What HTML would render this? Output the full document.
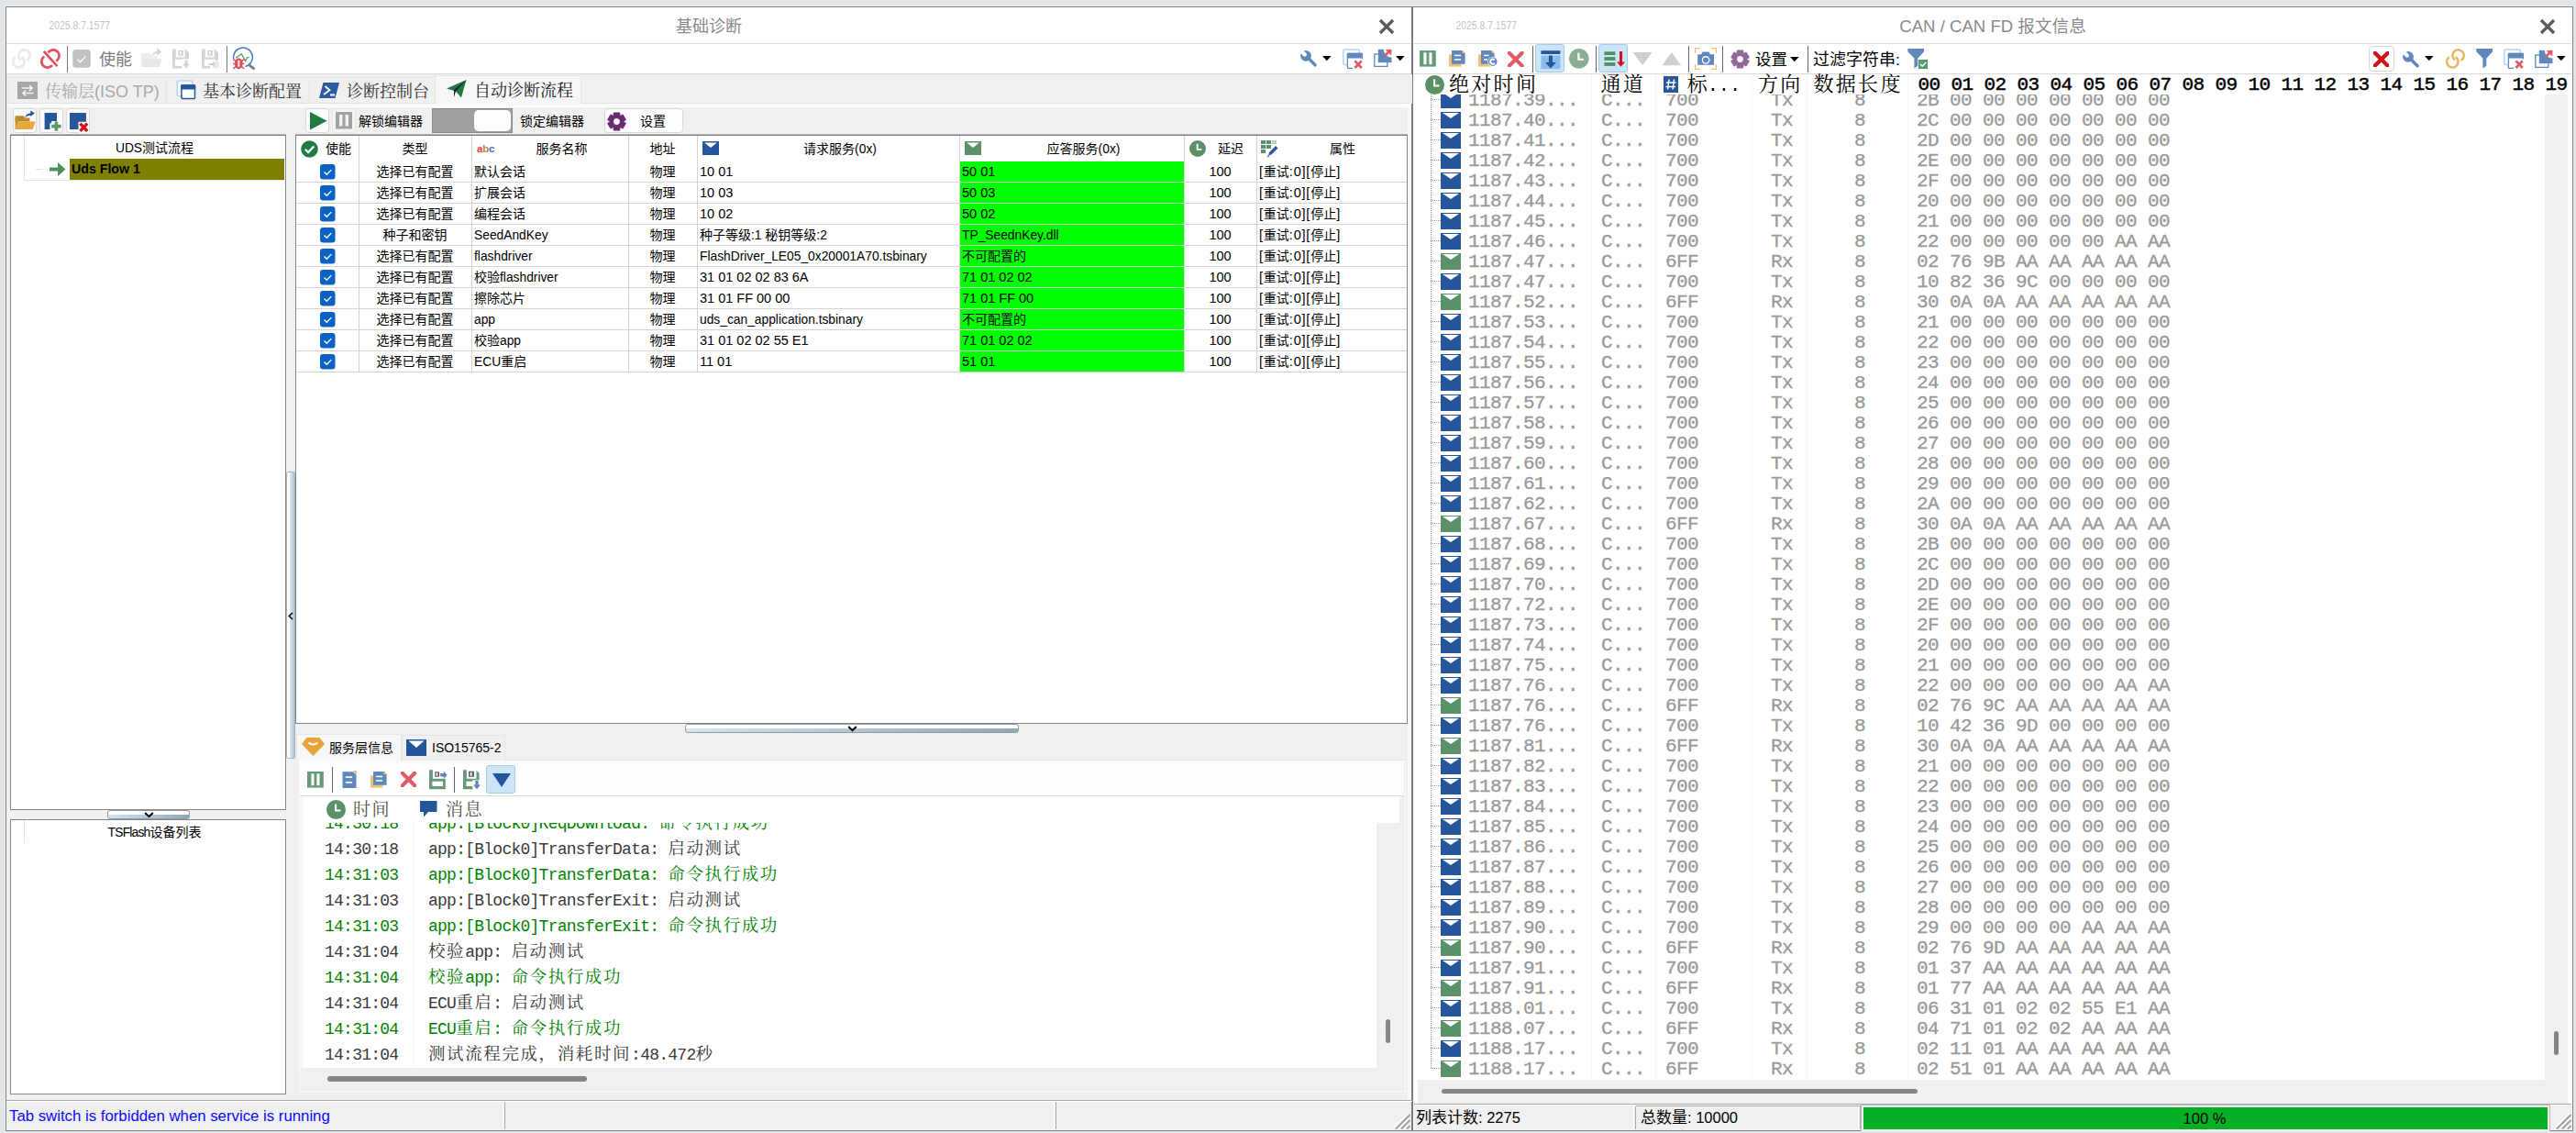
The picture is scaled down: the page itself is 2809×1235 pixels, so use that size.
<!DOCTYPE html>
<html lang="zh"><head><meta charset="utf-8"><title>UI</title><style>
*{box-sizing:border-box;margin:0;padding:0}
html,body{width:2809px;height:1235px;overflow:hidden}
body{background:#e1e4e9;position:relative;font-family:"Liberation Sans","Noto Sans CJK SC",sans-serif;font-size:14px;color:#000}
div,svg,span.a{position:absolute;white-space:nowrap}
.s{font-family:"Liberation Sans","Noto Serif CJK SC",serif}
.m{font-family:"Liberation Mono","Noto Serif CJK SC",monospace}
.l{font-size:13.8px}
.d{font-size:14.5px}
.k{font-size:14.5px;letter-spacing:.8px}
.btn{background:#fdfdfd;border:1px solid #d9d9d9;border-radius:4px}
.act{background:#cce4f7;border:1px solid #9fcdf0;border-radius:3px}
.sep{background:#666;width:1px}
.ctr{text-align:center}
.lg{font-size:18px;letter-spacing:-.750px;height:28px;line-height:28px}
.c{font-size:18.500px;letter-spacing:1.600px}
.cr{left:0;width:1233px;height:22px;line-height:22px;font-size:21px;letter-spacing:-.600px;color:#999;-webkit-text-stroke:.3px #999}
.cr span{position:absolute;top:1px}
.cr i{position:absolute;left:29px;top:2px;width:22px;height:18px;background:#25569b}
.cr i.g{background:#5b9168}
.cr i:after{content:"";position:absolute;left:2px;top:1.300px;border-left:9px solid transparent;border-right:9px solid transparent;border-top:6.500px solid #fff}
.cr b{position:absolute;left:18px;top:10px;width:11px;height:1px;background:repeating-linear-gradient(90deg,#9a9a9a 0,#9a9a9a 1px,#fff 1px,#fff 2px)}
</style></head><body>
<div style="left:5px;top:6px;width:1536px;height:1px;background:#e9ecf1"></div>
<div style="left:5px;top:6px;width:1px;height:1227px;background:#e9ecf1"></div>
<div style="left:6px;top:7px;width:1533px;height:1226px;background:#f0f0f0;border-left:1px solid #828282;border-top:1px solid #828282;border-bottom:1px solid #828282"></div>
<div style="left:7px;top:8px;width:1532px;height:73px;background:#fff"></div>
<div style="left:7px;top:47px;width:1533px;height:1px;background:#dedede"></div>
<div style="left:7px;top:80px;width:1533px;height:1px;background:#d9d9d9"></div>
<div style="left:573px;top:16px;height:26px;line-height:26px;width:400px;font-size:18px;color:#8a8a8a;text-align:center">基础诊断</div>
<div style="left:53.5px;top:18px;height:20px;line-height:20px;font-size:10.400px;color:#c4c4c4;transform:scaleY(1.270);transform-origin:left center">2025.8.7.1577</div>
<svg style="left:1503px;top:20px;" width="18" height="18" viewBox="0 0 18 18"><path d="M2 2L16 16M16 2L2 16" stroke="#5a5a5a" stroke-width="3.2" fill="none"/></svg>
<div style="left:1540px;top:6px;width:1266px;height:1px;background:#e9ecf1"></div>
<div style="left:1539px;top:7px;width:1267px;height:1226px;background:#fff;border-left:2px solid #7a7a7a;border-top:1px solid #828282;border-right:1px solid #828282;border-bottom:1px solid #828282"></div>
<div style="left:1542px;top:47px;width:1262px;height:1px;background:#dedede"></div>
<div style="left:1542px;top:80px;width:1262px;height:1px;background:#d9d9d9"></div>
<div style="left:1973px;top:16px;height:26px;line-height:26px;width:400px;font-size:18.6px;color:#8a8a8a;text-align:center">CAN / CAN FD 报文信息</div>
<div style="left:1587.5px;top:18px;height:20px;line-height:20px;font-size:10.400px;color:#c4c4c4;transform:scaleY(1.270);transform-origin:left center">2025.8.7.1577</div>
<svg style="left:2769px;top:20px;" width="18" height="18" viewBox="0 0 18 18"><path d="M2 2L16 16M16 2L2 16" stroke="#5a5a5a" stroke-width="3.2" fill="none"/></svg>
<svg style="left:12.5px;top:53px;" width="22" height="23" viewBox="0 0 22 23"><g fill="none" stroke="#ebebeb" stroke-width="2.8" stroke-linecap="round" stroke-dasharray="28.83 10.13"><circle cx="13.550" cy="7.500" r="6.2" transform="rotate(137 13.550 7.500)"/><circle cx="7.300" cy="14.300" r="6.2" transform="rotate(-47 7.300 14.300)"/></g></svg>
<svg style="left:44px;top:52px;" width="24" height="24" viewBox="0 0 24 24"><g fill="none" stroke="#e05060" stroke-width="2.700"><path d="M9.210 4.490A6.500 6.500 0 1 1 18.260 13.780" stroke-linecap="round"/><path d="M12.220 19.830A6.500 6.500 0 0 1 3.350 10.320" stroke-linecap="round"/><path d="M3.800 3.800L18.400 20.100"/></g></svg>
<div class="sep" style="left:73px;top:50px;width:1px;height:29px;background:#777"></div>
<svg style="left:79px;top:54px;" width="20" height="20" viewBox="0 0 20 20"><rect x=".2" y="0" width="19.600" height="19.800" rx="3.600" fill="#c2c2c2"/><path d="M5.300 10.700l3.100 3.100 6.200-6.400" stroke="#fff" stroke-width="1.300" fill="none"/></svg>
<div style="left:108px;top:53px;height:24px;line-height:24px;font-size:18px;color:#7d7d7d">使能</div>
<svg style="left:154px;top:52px;" width="24" height="22" viewBox="0 0 24 22"><path d="M0 6.300h9.600l1.500 2.200H17v4H0z" fill="#ededed"/><path d="M0 8.500L3 12.300.9 21H0z" fill="#ededed"/><path d="M3 12.300h19.600L19.900 21H.9z" fill="#e7e7e7"/><path d="M11.800 8.800C12.500 5.500 14.500 4 17.200 3.900V0L22 4.400 17.200 8.800V6.200C15 6.200 13.200 7 11.800 8.800z" fill="#d6d6d6"/></svg>
<svg style="left:188px;top:53px;" width="20" height="23" viewBox="0 0 20 23"><path d="M0 .4h14.200L18 4.600V21.600H0z" fill="#d5d5d5"/><rect x="3.800" y="0" width="9.800" height="9.400" fill="#fff"/><rect x="6.300" y="2" width="5.400" height="5.800" fill="#cfcfcf"/><rect x="8" y="3" width="1.600" height="3.800" fill="#fff"/><rect x="3" y="11.800" width="12" height="7.100" fill="#fff"/><rect x="10.400" y="11.300" width="10" height="11" fill="#fff"/><path d="M13.500 12.400h3v4.400h2.400L15 21.600 11.200 16.800h2.300z" fill="#d5d5d5"/></svg>
<svg style="left:220px;top:53px;" width="20" height="23" viewBox="0 0 20 23"><path d="M0 .4h14.200L18 4.600V21.600H0z" fill="#d5d5d5"/><rect x="3.800" y="0" width="9.800" height="9.400" fill="#fff"/><rect x="6.300" y="2" width="5.400" height="5.800" fill="#cfcfcf"/><rect x="8" y="3" width="1.600" height="3.800" fill="#fff"/><rect x="3" y="11.800" width="12" height="7.100" fill="#fff"/><rect x="9" y="13" width="11" height="9" fill="#fff"/><rect x="12" y="14" width="7" height="7" fill="#e9e9e9"/><path d="M7.700 16h4v-1.800L14.800 17 11.700 19.800V18h-4z" fill="#d0d0d0"/></svg>
<div class="sep" style="left:247px;top:50px;width:1px;height:29px;background:#777"></div>
<svg style="left:253px;top:51px;" width="26" height="26" viewBox="0 0 26 26"><path d="M1.800 13.500A10.400 10.400 0 1 1 14.500 21.500" fill="none" stroke="#4a78b8" stroke-width="1.500"/><path d="M18.700 19.800l4.900 3.800" stroke="#7d7d7d" stroke-width="2.800" stroke-linecap="round"/><path d="M4.300 12.200l6-4.600 4.400 7.900 1.900-3.800h2.100" stroke="#5a9a6a" stroke-width="1.300" fill="none"/><ellipse cx="7.300" cy="18.300" rx="4.400" ry="6" fill="#e0505e"/><path d="M1.300 13.600l3.500 2.500M1 18.500h4M1.300 23.800l3.500-2.600M13.300 13.600L9.800 16.100M13.600 18.500h-4M13.300 23.800L9.800 21.200" stroke="#e0505e" stroke-width="1.500"/><rect x="6.400" y="14.800" width="1.900" height="6.800" fill="#fff"/></svg>
<svg style="left:1417px;top:54px;" width="20" height="20" viewBox="0 0 20 20"><circle cx="7" cy="6.800" r="5.900" fill="#6088bc"/><path d="M5.700 5.500L0 -.2" stroke="#fff" stroke-width="4.300" stroke-linecap="round"/><path d="M9 8.800l8 8" stroke="#6088bc" stroke-width="3.500" stroke-linecap="round"/></svg>
<svg style="left:1442px;top:61px;" width="10" height="6" viewBox="0 0 10 6"><path d="M0 0h9.600L4.800 5.200z" fill="#000"/></svg>
<svg style="left:1464px;top:53px;" width="24" height="24" viewBox="0 0 24 24"><rect x=".8" y="1" width="17.400" height="16.600" rx="1.500" fill="#fff" stroke="#b5d4f5" stroke-width="1.500"/><rect x="5.400" y="5.400" width="16" height="16" rx="1" fill="#fff" stroke="#6088bc" stroke-width="1.300"/><rect x="4.800" y="4.800" width="17.200" height="5.800" rx="1" fill="#6088bc"/><rect x="11.200" y="11.500" width="12" height="12" fill="#fff"/><path d="M13.400 13.400l7.400 7.600M20.800 13.400l-7.400 7.600" stroke="#e05a68" stroke-width="2.700"/></svg>
<svg style="left:1497px;top:53px;" width="22" height="22" viewBox="0 0 22 22"><rect x="1.800" y="6" width="14" height="13.400" fill="#fff" stroke="#6088bc" stroke-width="1.300"/><rect x="5.800" y=".8" width="14.700" height="14.400" fill="#6088bc"/><circle cx="20.500" cy=".8" r="8.800" fill="#fff"/><path d="M12.800 8L17.500 3.500" stroke="#e05a68" stroke-width="2.800"/><path d="M13.600 1.200L20.600.700 20.200 7.600z" fill="#e05a68"/></svg>
<svg style="left:1522px;top:61px;" width="10" height="6" viewBox="0 0 10 6"><path d="M0 0h9.600L4.800 5.200z" fill="#000"/></svg>
<div style="left:7px;top:81px;width:1533px;height:32px;background:#f0f0f0"></div>
<div style="left:9px;top:84px;width:173px;height:29px;border:1px solid #e6e6e6;border-bottom:none;background:#f0f0f0"></div>
<div style="left:181px;top:84px;width:157px;height:29px;border:1px solid #e6e6e6;border-bottom:none;background:#f0f0f0"></div>
<div style="left:337px;top:84px;width:138px;height:29px;border:1px solid #e6e6e6;border-bottom:none;background:#f0f0f0"></div>
<div style="left:474px;top:82px;width:160px;height:32px;border:1px solid #e8e8e8;border-bottom:none;background:#f7f7f7"></div>
<div style="left:9px;top:112px;width:465px;height:1px;background:#e2e2e2"></div>
<div style="left:634px;top:112px;width:902px;height:1px;background:#e2e2e2"></div>
<div style="left:9px;top:113px;width:1527px;height:3px;background:#fafafa"></div>
<div style="left:9px;top:116px;width:1527px;height:1px;background:#fff"></div>
<svg style="left:19px;top:89px;" width="22" height="19" viewBox="0 0 22 19"><rect width="22" height="19" fill="#a6a6a6"/><path d="M4.500 7h11.500M13 4l3 3-3 3M17.500 12.500H6M9 9.500l-3 3 3 3" stroke="#f4f4f4" stroke-width="1.7" fill="none"/></svg>
<div class="s" style="left:49px;top:87px;height:26px;line-height:26px;font-size:18px;color:#a9a9a9">传输层(ISO TP)</div>
<svg style="left:192px;top:87px;" width="23" height="22" viewBox="0 0 23 22"><rect x="1.300" y="1" width="16.700" height="16.800" rx="1.500" fill="#f4f8fd" stroke="#b5d4f5" stroke-width="1.500"/><rect x="5.900" y="5.900" width="14.600" height="14.600" rx="1" fill="#fff" stroke="#25569b" stroke-width="1.500"/><rect x="5.200" y="5.200" width="16" height="5.400" rx="1" fill="#25569b"/></svg>
<div class="s" style="left:221px;top:87px;height:26px;line-height:26px;font-size:18px;color:#333">基本诊断配置</div>
<svg style="left:348px;top:90px;" width="22" height="17" viewBox="0 0 22 17"><path d="M4.500 0H22L17.500 17H0z" fill="#2c5aa0"/><path d="M6.500 4l5 4.300-6.500 4.700M12 13.500h5" stroke="#fff" stroke-width="1.800" fill="none"/></svg>
<div class="s" style="left:378px;top:87px;height:26px;line-height:26px;font-size:18px;color:#333">诊断控制台</div>
<svg style="left:487px;top:87px;" width="22" height="20" viewBox="0 0 22 20"><path d="M0 9.500L21.500 0 16 19.500 10 12.500z" fill="#1f7a43"/><path d="M10 12.500L21.500 0 8 11v8z" fill="#222"/></svg>
<div class="s" style="left:517px;top:86px;height:26px;line-height:26px;font-size:18px;color:#222">自动诊断流程</div>
<div class="btn" style="left:13.5px;top:118px;width:26px;height:26.5px;"></div>
<div class="btn" style="left:42.5px;top:118px;width:26px;height:26.5px;"></div>
<div class="btn" style="left:71.5px;top:118px;width:26px;height:26.5px;"></div>
<svg style="left:16px;top:120px;" width="24" height="22" viewBox="0 0 24 22"><path d="M.5 6.200h9.200l1.600 2.300h5.200v4H.5z" fill="#b98a32"/><path d="M.5 8L4.500 12.400.9 21H.5z" fill="#c9932f"/><path d="M4.500 12.400h18.300L19.700 21H.9z" fill="#e8a83c"/><path d="M11.200 8.400C12 5.300 14 3.700 17.200 3.600V.2L21.900 3.500 17.200 7V5.700C14.800 5.700 12.800 6.600 11.200 8.400z" fill="#25569b"/></svg>
<svg style="left:48px;top:122px;" width="20" height="22" viewBox="0 0 20 22"><path d="M.6 1H14v9h-5.800v2.200H6.400V19H.6z" fill="#25569b"/><path d="M11.600 10.400h3.600v3.400h3.400v3.600h-3.400v3.400h-3.600v-3.400H8.200v-3.600h3.400z" fill="#5b9a68"/></svg>
<svg style="left:75px;top:122px;" width="22" height="23" viewBox="0 0 22 23"><rect x="1" y="1" width="17.900" height="18" fill="#25569b"/><rect x="10.500" y="10.800" width="12" height="12" fill="#fdfdfd"/><path d="M12.400 12.600l7.800 8.200M20.200 12.600l-7.800 8.200" stroke="#d0121b" stroke-width="3.400"/></svg>
<div class="btn" style="left:332.5px;top:118px;width:26px;height:26.5px;"></div>
<svg style="left:338px;top:122px;" width="19" height="20" viewBox="0 0 19 20"><path d="M0 0L18.500 9.700 0 19.500z" fill="#1f7a43"/></svg>
<div style="left:362px;top:118px;width:26px;height:27px;background:#f4f4f4;border:1px solid #e6e6e6;border-radius:3px"></div>
<svg style="left:366px;top:122px;" width="18" height="19" viewBox="0 0 18 19"><rect width="18" height="18.500" fill="#a3a3a3"/><rect x="4" y="3" width="3.400" height="12.500" fill="#f2f2f2"/><rect x="10.600" y="3" width="3.400" height="12.500" fill="#f2f2f2"/></svg>
<div style="left:391px;top:120px;height:24px;line-height:24px;font-size:14px">解锁编辑器</div>
<div style="left:471px;top:118px;width:88px;height:27px;background:#a0a0a0;border:1px solid #8a8a8a"></div>
<div style="left:517px;top:120px;width:40px;height:23px;background:#fdfdfd;border-radius:5px"></div>
<div style="left:567px;top:120px;height:24px;line-height:24px;font-size:14px">锁定编辑器</div>
<div class="btn" style="left:658.5px;top:118px;width:86px;height:26.5px;"></div>
<svg style="left:661.5px;top:121.5px;" width="21" height="21" viewBox="0 0 21 21"><path fill-rule="evenodd" fill="#6a2c70" stroke="#6a2c70" stroke-width="1.6" stroke-linejoin="round" d="M7.48 4.08 L7.53 1.37 L13.47 1.37 L13.52 4.08 L14.55 4.67 L16.92 3.37 L19.89 8.50 L17.58 9.91 L17.58 11.09 L19.89 12.50 L16.92 17.63 L14.55 16.33 L13.52 16.92 L13.47 19.63 L7.53 19.63 L7.48 16.92 L6.45 16.33 L4.08 17.63 L1.11 12.50 L3.42 11.09 L3.42 9.91 L1.11 8.50 L4.08 3.37 L6.45 4.67Z M14.70 10.50 A4.2 4.2 0 1 0 6.30 10.50 A4.2 4.2 0 1 0 14.70 10.50Z"/></svg>
<div style="left:698px;top:120px;height:24px;line-height:24px;font-size:14px">设置</div>
<div style="left:11px;top:146px;width:301px;height:1px;background:#b2b4b9"></div>
<div style="left:11px;top:147px;width:301px;height:736px;background:#fff;border:1px solid #828790;border-top:1px solid #7c7f86"></div>
<div style="left:26px;top:148px;width:1px;height:49px;background:#e3e3e3"></div>
<div style="left:26px;top:196px;width:284px;height:1px;background:#e3e3e3"></div>
<div style="left:27px;top:149px;height:24px;line-height:24px;width:283px;text-align:center"><span class="l">UDS</span>测试流程</div>
<div style="left:76px;top:173px;width:234px;height:23px;background:#808000"></div>
<div style="left:39px;top:184px;width:8px;height:1px;background:#e0e0e0"></div>
<svg style="left:54px;top:176px;" width="18" height="17" viewBox="0 0 18 17"><path d="M0 6.500h9V1l8.500 7.500L9 16v-5.500H0z" fill="#4f8f60"/></svg>
<div style="left:78px;top:172px;height:24px;line-height:24px;font-weight:bold;font-size:14.2px">Uds Flow 1</div>
<div style="left:116.5px;top:883px;width:90px;height:10px;background:linear-gradient(#fff 0,#fff 48%,rgba(255,255,255,0) 52%),linear-gradient(90deg,#cfe6f4,#8fa8b8);border:1px solid #9a9a9a;border-radius:3px"></div>
<svg style="left:157px;top:884.5px;" width="11" height="7" viewBox="0 0 11 7"><path d="M1.200 1l4.300 4.200L9.800 1" stroke="#000" stroke-width="2" fill="none"/></svg>
<div style="left:11px;top:893px;width:301px;height:300px;background:#fff;border:1px solid #828790"></div>
<div style="left:26px;top:894px;width:1px;height:25px;background:#e3e3e3"></div>
<div style="left:27px;top:895px;height:24px;line-height:24px;width:283px;text-align:center"><span class="l" style="letter-spacing:-.8px">TSFlash</span>设备列表</div>
<div style="left:312px;top:514px;width:10px;height:313px;background:linear-gradient(90deg,#fff 0,#fff 35%,#d4e6f2 45%,#a9c4d6 100%);border:1px solid #b0b0b0;border-radius:2px"></div>
<svg style="left:314px;top:667px;" width="6" height="9" viewBox="0 0 6 9"><path d="M5 1L1.200 4.500 5 8" stroke="#000" stroke-width="1.500" fill="none"/></svg>
<div style="left:1535px;top:113px;width:4px;height:1086px;background:#f9f9f9"></div>
<div style="left:322px;top:146px;width:1213px;height:1px;background:#b2b4b9"></div>
<div style="left:322px;top:147px;width:1213px;height:642px;background:#fff;border:1px solid #828790;border-top:1px solid #7c7f86"></div>
<div style="left:391px;top:148px;width:1px;height:258px;background:#d4d4d4"></div>
<div style="left:514px;top:148px;width:1px;height:258px;background:#d4d4d4"></div>
<div style="left:685px;top:148px;width:1px;height:258px;background:#d4d4d4"></div>
<div style="left:760px;top:148px;width:1px;height:258px;background:#d4d4d4"></div>
<div style="left:1046px;top:148px;width:1px;height:258px;background:#d4d4d4"></div>
<div style="left:1291px;top:148px;width:1px;height:258px;background:#d4d4d4"></div>
<div style="left:1370px;top:148px;width:1px;height:258px;background:#d4d4d4"></div>
<svg style="left:328px;top:153px;" width="19" height="19" viewBox="0 0 19 19"><circle cx="9.500" cy="9.500" r="9.300" fill="#1f7a43"/><path d="M4.800 9.800l3.300 3.300 6.200-6.600" stroke="#fff" stroke-width="2.300" fill="none"/></svg>
<div style="left:355px;top:150px;height:25px;line-height:25px;">使能</div>
<div style="left:391px;top:150px;height:25px;line-height:25px;width:123px;text-align:center">类型</div>
<div style="left:520px;top:150px;height:25px;line-height:25px;font-size:11.5px;font-weight:bold;letter-spacing:-.2px"><span style="color:#d8424f">a</span><span style="color:#b98a3c">b</span><span style="color:#3c6eb4">c</span></div>
<div style="left:540px;top:150px;height:25px;line-height:25px;width:145px;text-align:center">服务名称</div>
<div style="left:685px;top:150px;height:25px;line-height:25px;width:75px;text-align:center">地址</div>
<svg style="left:766px;top:154px;" width="18" height="15" viewBox="0 0 18 15"><rect width="18" height="15" fill="#25569b"/><path d="M2.2 1.5H15.8L9.0 6.9z" fill="#fff"/></svg>
<div style="left:786px;top:150px;height:25px;line-height:25px;width:260px;text-align:center">请求服务<span class="l">(0x)</span></div>
<svg style="left:1052px;top:154px;" width="18" height="15" viewBox="0 0 18 15"><rect width="18" height="15" fill="#5b9168"/><path d="M2.2 1.5H15.8L9.0 6.9z" fill="#fff"/></svg>
<div style="left:1072px;top:150px;height:25px;line-height:25px;width:219px;text-align:center">应答服务<span class="l">(0x)</span></div>
<svg style="left:1297px;top:153px;" width="18" height="18" viewBox="0 0 20 20"><circle cx="10" cy="10" r="10" fill="#5b9168"/><path d="M9.600 4.300v6.600h5.200" stroke="#fff" stroke-width="2" fill="none"/></svg>
<div style="left:1328px;top:150px;height:25px;line-height:25px;">延迟</div>
<svg style="left:1375px;top:153px;" width="19" height="19" viewBox="0 0 19 19"><g fill="#5b9168"><rect x="0" y="0" width="5" height="4"/><rect x="6" y="0" width="5" height="4"/><rect x="12" y="0" width="5" height="4" fill="#b9d2c0"/><rect x="0" y="5" width="5" height="4"/><rect x="6" y="5" width="5" height="4"/><rect x="0" y="10" width="5" height="4"/></g><path d="M8 16.500l1-3.500 7-7 2.500 2.500-7 7z" fill="#2c5aa0"/><path d="M6.800 18.500l.900-2.400 1.500 1.500z" fill="#2c5aa0"/></svg>
<div style="left:1396px;top:150px;height:25px;line-height:25px;width:136px;text-align:center">属性</div>
<div style="left:323px;top:198px;width:1211px;height:1px;background:#d4d4d4"></div>
<div style="left:1047px;top:176px;width:244px;height:22px;background:#00ff00"></div>
<svg style="left:349px;top:179px;" width="17" height="17" viewBox="0 0 17 17"><rect width="16.500" height="16.500" rx="3.200" fill="#0c62c4"/><path d="M4.500 8.500l2.800 2.800 5-5.200" stroke="#fff" stroke-width="1.300" fill="none"/></svg>
<div style="left:391px;top:176px;height:22px;line-height:22px;width:123px;text-align:center">选择已有配置</div>
<div style="left:517px;top:176px;height:22px;line-height:22px;">默认会话</div>
<div style="left:685px;top:176px;height:22px;line-height:22px;width:75px;text-align:center">物理</div>
<div style="left:763px;top:176px;height:22px;line-height:22px;"><span class="d">10 01</span></div>
<div style="left:1049px;top:176px;height:22px;line-height:22px;"><span class="d">50 01</span></div>
<div style="left:1291px;top:176px;height:22px;line-height:22px;width:79px;text-align:center"><span class="d">100</span></div>
<div style="left:1373px;top:176px;height:22px;line-height:22px;"><span class="k">[</span>重试<span class="k">:0][</span>停止<span class="k">]</span></div>
<div style="left:323px;top:221px;width:1211px;height:1px;background:#d4d4d4"></div>
<div style="left:1047px;top:199px;width:244px;height:22px;background:#00ff00"></div>
<svg style="left:349px;top:202px;" width="17" height="17" viewBox="0 0 17 17"><rect width="16.500" height="16.500" rx="3.200" fill="#0c62c4"/><path d="M4.500 8.500l2.800 2.800 5-5.200" stroke="#fff" stroke-width="1.300" fill="none"/></svg>
<div style="left:391px;top:199px;height:22px;line-height:22px;width:123px;text-align:center">选择已有配置</div>
<div style="left:517px;top:199px;height:22px;line-height:22px;">扩展会话</div>
<div style="left:685px;top:199px;height:22px;line-height:22px;width:75px;text-align:center">物理</div>
<div style="left:763px;top:199px;height:22px;line-height:22px;"><span class="d">10 03</span></div>
<div style="left:1049px;top:199px;height:22px;line-height:22px;"><span class="d">50 03</span></div>
<div style="left:1291px;top:199px;height:22px;line-height:22px;width:79px;text-align:center"><span class="d">100</span></div>
<div style="left:1373px;top:199px;height:22px;line-height:22px;"><span class="k">[</span>重试<span class="k">:0][</span>停止<span class="k">]</span></div>
<div style="left:323px;top:244px;width:1211px;height:1px;background:#d4d4d4"></div>
<div style="left:1047px;top:222px;width:244px;height:22px;background:#00ff00"></div>
<svg style="left:349px;top:225px;" width="17" height="17" viewBox="0 0 17 17"><rect width="16.500" height="16.500" rx="3.200" fill="#0c62c4"/><path d="M4.500 8.500l2.800 2.800 5-5.200" stroke="#fff" stroke-width="1.300" fill="none"/></svg>
<div style="left:391px;top:222px;height:22px;line-height:22px;width:123px;text-align:center">选择已有配置</div>
<div style="left:517px;top:222px;height:22px;line-height:22px;">编程会话</div>
<div style="left:685px;top:222px;height:22px;line-height:22px;width:75px;text-align:center">物理</div>
<div style="left:763px;top:222px;height:22px;line-height:22px;"><span class="d">10 02</span></div>
<div style="left:1049px;top:222px;height:22px;line-height:22px;"><span class="d">50 02</span></div>
<div style="left:1291px;top:222px;height:22px;line-height:22px;width:79px;text-align:center"><span class="d">100</span></div>
<div style="left:1373px;top:222px;height:22px;line-height:22px;"><span class="k">[</span>重试<span class="k">:0][</span>停止<span class="k">]</span></div>
<div style="left:323px;top:267px;width:1211px;height:1px;background:#d4d4d4"></div>
<div style="left:1047px;top:245px;width:244px;height:22px;background:#00ff00"></div>
<svg style="left:349px;top:248px;" width="17" height="17" viewBox="0 0 17 17"><rect width="16.500" height="16.500" rx="3.200" fill="#0c62c4"/><path d="M4.500 8.500l2.800 2.800 5-5.200" stroke="#fff" stroke-width="1.300" fill="none"/></svg>
<div style="left:391px;top:245px;height:22px;line-height:22px;width:123px;text-align:center">种子和密钥</div>
<div style="left:517px;top:245px;height:22px;line-height:22px;"><span class="l">SeedAndKey</span></div>
<div style="left:685px;top:245px;height:22px;line-height:22px;width:75px;text-align:center">物理</div>
<div style="left:763px;top:245px;height:22px;line-height:22px;">种子等级<span class="l">:1 </span>秘钥等级<span class="l">:2</span></div>
<div style="left:1049px;top:245px;height:22px;line-height:22px;"><span class="l">TP_SeednKey.dll</span></div>
<div style="left:1291px;top:245px;height:22px;line-height:22px;width:79px;text-align:center"><span class="d">100</span></div>
<div style="left:1373px;top:245px;height:22px;line-height:22px;"><span class="k">[</span>重试<span class="k">:0][</span>停止<span class="k">]</span></div>
<div style="left:323px;top:290px;width:1211px;height:1px;background:#d4d4d4"></div>
<div style="left:1047px;top:268px;width:244px;height:22px;background:#00ff00"></div>
<svg style="left:349px;top:271px;" width="17" height="17" viewBox="0 0 17 17"><rect width="16.500" height="16.500" rx="3.200" fill="#0c62c4"/><path d="M4.500 8.500l2.800 2.800 5-5.200" stroke="#fff" stroke-width="1.300" fill="none"/></svg>
<div style="left:391px;top:268px;height:22px;line-height:22px;width:123px;text-align:center">选择已有配置</div>
<div style="left:517px;top:268px;height:22px;line-height:22px;"><span class="l">flashdriver</span></div>
<div style="left:685px;top:268px;height:22px;line-height:22px;width:75px;text-align:center">物理</div>
<div style="left:763px;top:268px;height:22px;line-height:22px;"><span class="l">FlashDriver_LE05_0x20001A70.tsbinary</span></div>
<div style="left:1049px;top:268px;height:22px;line-height:22px;">不可配置的</div>
<div style="left:1291px;top:268px;height:22px;line-height:22px;width:79px;text-align:center"><span class="d">100</span></div>
<div style="left:1373px;top:268px;height:22px;line-height:22px;"><span class="k">[</span>重试<span class="k">:0][</span>停止<span class="k">]</span></div>
<div style="left:323px;top:313px;width:1211px;height:1px;background:#d4d4d4"></div>
<div style="left:1047px;top:291px;width:244px;height:22px;background:#00ff00"></div>
<svg style="left:349px;top:294px;" width="17" height="17" viewBox="0 0 17 17"><rect width="16.500" height="16.500" rx="3.200" fill="#0c62c4"/><path d="M4.500 8.500l2.800 2.800 5-5.200" stroke="#fff" stroke-width="1.300" fill="none"/></svg>
<div style="left:391px;top:291px;height:22px;line-height:22px;width:123px;text-align:center">选择已有配置</div>
<div style="left:517px;top:291px;height:22px;line-height:22px;">校验<span class="l">flashdriver</span></div>
<div style="left:685px;top:291px;height:22px;line-height:22px;width:75px;text-align:center">物理</div>
<div style="left:763px;top:291px;height:22px;line-height:22px;"><span class="d">31 01 02 02 83 6A</span></div>
<div style="left:1049px;top:291px;height:22px;line-height:22px;"><span class="d">71 01 02 02</span></div>
<div style="left:1291px;top:291px;height:22px;line-height:22px;width:79px;text-align:center"><span class="d">100</span></div>
<div style="left:1373px;top:291px;height:22px;line-height:22px;"><span class="k">[</span>重试<span class="k">:0][</span>停止<span class="k">]</span></div>
<div style="left:323px;top:336px;width:1211px;height:1px;background:#d4d4d4"></div>
<div style="left:1047px;top:314px;width:244px;height:22px;background:#00ff00"></div>
<svg style="left:349px;top:317px;" width="17" height="17" viewBox="0 0 17 17"><rect width="16.500" height="16.500" rx="3.200" fill="#0c62c4"/><path d="M4.500 8.500l2.800 2.800 5-5.200" stroke="#fff" stroke-width="1.300" fill="none"/></svg>
<div style="left:391px;top:314px;height:22px;line-height:22px;width:123px;text-align:center">选择已有配置</div>
<div style="left:517px;top:314px;height:22px;line-height:22px;">擦除芯片</div>
<div style="left:685px;top:314px;height:22px;line-height:22px;width:75px;text-align:center">物理</div>
<div style="left:763px;top:314px;height:22px;line-height:22px;"><span class="d">31 01 FF 00 00</span></div>
<div style="left:1049px;top:314px;height:22px;line-height:22px;"><span class="d">71 01 FF 00</span></div>
<div style="left:1291px;top:314px;height:22px;line-height:22px;width:79px;text-align:center"><span class="d">100</span></div>
<div style="left:1373px;top:314px;height:22px;line-height:22px;"><span class="k">[</span>重试<span class="k">:0][</span>停止<span class="k">]</span></div>
<div style="left:323px;top:359px;width:1211px;height:1px;background:#d4d4d4"></div>
<div style="left:1047px;top:337px;width:244px;height:22px;background:#00ff00"></div>
<svg style="left:349px;top:340px;" width="17" height="17" viewBox="0 0 17 17"><rect width="16.500" height="16.500" rx="3.200" fill="#0c62c4"/><path d="M4.500 8.500l2.800 2.800 5-5.200" stroke="#fff" stroke-width="1.300" fill="none"/></svg>
<div style="left:391px;top:337px;height:22px;line-height:22px;width:123px;text-align:center">选择已有配置</div>
<div style="left:517px;top:337px;height:22px;line-height:22px;"><span class="l">app</span></div>
<div style="left:685px;top:337px;height:22px;line-height:22px;width:75px;text-align:center">物理</div>
<div style="left:763px;top:337px;height:22px;line-height:22px;"><span class="l">uds_can_application.tsbinary</span></div>
<div style="left:1049px;top:337px;height:22px;line-height:22px;">不可配置的</div>
<div style="left:1291px;top:337px;height:22px;line-height:22px;width:79px;text-align:center"><span class="d">100</span></div>
<div style="left:1373px;top:337px;height:22px;line-height:22px;"><span class="k">[</span>重试<span class="k">:0][</span>停止<span class="k">]</span></div>
<div style="left:323px;top:382px;width:1211px;height:1px;background:#d4d4d4"></div>
<div style="left:1047px;top:360px;width:244px;height:22px;background:#00ff00"></div>
<svg style="left:349px;top:363px;" width="17" height="17" viewBox="0 0 17 17"><rect width="16.500" height="16.500" rx="3.200" fill="#0c62c4"/><path d="M4.500 8.500l2.800 2.800 5-5.200" stroke="#fff" stroke-width="1.300" fill="none"/></svg>
<div style="left:391px;top:360px;height:22px;line-height:22px;width:123px;text-align:center">选择已有配置</div>
<div style="left:517px;top:360px;height:22px;line-height:22px;">校验<span class="l">app</span></div>
<div style="left:685px;top:360px;height:22px;line-height:22px;width:75px;text-align:center">物理</div>
<div style="left:763px;top:360px;height:22px;line-height:22px;"><span class="d">31 01 02 02 55 E1</span></div>
<div style="left:1049px;top:360px;height:22px;line-height:22px;"><span class="d">71 01 02 02</span></div>
<div style="left:1291px;top:360px;height:22px;line-height:22px;width:79px;text-align:center"><span class="d">100</span></div>
<div style="left:1373px;top:360px;height:22px;line-height:22px;"><span class="k">[</span>重试<span class="k">:0][</span>停止<span class="k">]</span></div>
<div style="left:323px;top:405px;width:1211px;height:1px;background:#d4d4d4"></div>
<div style="left:1047px;top:383px;width:244px;height:22px;background:#00ff00"></div>
<svg style="left:349px;top:386px;" width="17" height="17" viewBox="0 0 17 17"><rect width="16.500" height="16.500" rx="3.200" fill="#0c62c4"/><path d="M4.500 8.500l2.800 2.800 5-5.200" stroke="#fff" stroke-width="1.300" fill="none"/></svg>
<div style="left:391px;top:383px;height:22px;line-height:22px;width:123px;text-align:center">选择已有配置</div>
<div style="left:517px;top:383px;height:22px;line-height:22px;"><span class="l">ECU</span>重启</div>
<div style="left:685px;top:383px;height:22px;line-height:22px;width:75px;text-align:center">物理</div>
<div style="left:763px;top:383px;height:22px;line-height:22px;"><span class="d">11 01</span></div>
<div style="left:1049px;top:383px;height:22px;line-height:22px;"><span class="d">51 01</span></div>
<div style="left:1291px;top:383px;height:22px;line-height:22px;width:79px;text-align:center"><span class="d">100</span></div>
<div style="left:1373px;top:383px;height:22px;line-height:22px;"><span class="k">[</span>重试<span class="k">:0][</span>停止<span class="k">]</span></div>
<div style="left:747px;top:789px;width:364px;height:10px;background:linear-gradient(#fff 0,#fff 48%,rgba(255,255,255,0) 52%),linear-gradient(90deg,#cfe6f4,#8fa8b8);border:1px solid #9a9a9a;border-radius:3px"></div>
<svg style="left:924px;top:790.5px;" width="11" height="7" viewBox="0 0 11 7"><path d="M1.200 1l4.300 4.200L9.800 1" stroke="#000" stroke-width="2" fill="none"/></svg>
<div style="left:323px;top:800px;width:115px;height:29px;background:#f7f7f7;border:1px solid #e6e6e6;border-bottom:none"></div>
<div style="left:438px;top:801px;width:113px;height:28px;background:#f0f0f0;border:1px solid #e6e6e6;border-bottom:none"></div>
<div style="left:551px;top:828px;width:984px;height:1px;background:#e6e6e6"></div>
<svg style="left:329px;top:804px;" width="25" height="20" viewBox="0 0 25 20"><path d="M5.500 0h14L25 7 12.500 20 0 7z" fill="#e8a33a"/><path d="M7.500 5.500q5 4 10 0" stroke="#fff" stroke-width="1.700" fill="none"/></svg>
<div style="left:359px;top:802px;height:26px;line-height:26px;">服务层信息</div>
<svg style="left:443px;top:806px;" width="22" height="18" viewBox="0 0 22 18"><rect width="22" height="18" fill="#25569b"/><path d="M2.500 1.500h17L11 9z" fill="#fff"/></svg>
<div style="left:471px;top:802px;height:26px;line-height:26px;"><span style="font-size:14px">ISO15765-2</span></div>
<div style="left:326px;top:829px;width:1207px;height:361px;background:#f0f0f0;border:1px solid #fafafa"></div>
<div style="left:327px;top:829px;width:1204px;height:3px;background:#fafafa"></div>
<div style="left:327px;top:832px;width:1204px;height:36px;background:#fefefe"></div>
<div style="left:327px;top:867px;width:1204px;height:1px;background:#dcdcdc"></div>
<svg style="left:335px;top:841px;" width="18" height="18" viewBox="0 0 18 18"><rect width="17.800" height="17.600" fill="#669a78"/><rect x="4.400" y="2.300" width="3.100" height="12.900" fill="#fff"/><rect x="10.400" y="2.300" width="3.100" height="12.900" fill="#fff"/></svg>
<div class="sep" style="left:362px;top:836px;width:1px;height:28px;"></div>
<svg style="left:373px;top:840px;" width="17" height="19" viewBox="0 0 17 19"><path d="M.5 1.200h15V19H.5z" fill="#6088bc"/><path d="M11 0l5 5V0z" fill="#fff"/><path d="M11.600 0l4.400 4.400V0z" fill="#f0c070"/><rect x="3.800" y="6.300" width="7.400" height="1.600" fill="#fff"/><rect x="3.800" y="12" width="7.400" height="1.600" fill="#fff"/></svg>
<svg style="left:404px;top:841px;" width="22" height="18" viewBox="0 0 22 18"><rect x="0" y="4.400" width="13.400" height="13.200" fill="#f0c070"/><path d="M3 0h11.600l3 3v11.700H3z" fill="#6088bc"/><path d="M14.600 0l3 3h-3z" fill="#f0c070"/><rect x="6" y="4.700" width="7.100" height="1.500" fill="#fff"/><rect x="6" y="9.200" width="7.100" height="1.500" fill="#fff"/></svg>
<svg style="left:436.5px;top:841px;" width="17" height="17" viewBox="0 0 17 17"><path d="M1.800 1.800L15.2 15.2M15.2 1.800L1.800 15.2" stroke="#e05a68" stroke-width="4.1" stroke-linecap="round" fill="none"/></svg>
<svg style="left:468px;top:839px;" width="21" height="22" viewBox="0 0 21 22"><path d="M0 .3H14L17.800 4V21.300H0z" fill="#669a78"/><rect x="3.900" y="0" width="15.500" height="9.800" fill="#fff"/><rect x="6.200" y="2.200" width="4.800" height="5.600" fill="#666"/><rect x="7.600" y="3.300" width="1.700" height="3.400" fill="#fff"/><path d="M12.200 3.900h3.600V1.700l3.900 4-3.900 4V7.500h-3.600z" fill="#6088bc"/><rect x="3.400" y="12.700" width="11.600" height="5.300" fill="#fff"/></svg>
<div class="sep" style="left:495px;top:836px;width:1px;height:28px;"></div>
<svg style="left:505px;top:839px;" width="21" height="23" viewBox="0 0 21 23"><path d="M0 .3H14L17.600 4V21.300H0z" fill="#669a78"/><rect x="3.900" y="0" width="10.600" height="9.800" fill="#fff"/><rect x="6" y="1.700" width="6" height="6.100" fill="#666"/><rect x="7.800" y="3" width="1.800" height="3.600" fill="#fff"/><rect x="3.400" y="12.700" width="9" height="5.300" fill="#fff"/><rect x="10.300" y="11.300" width="10" height="11" fill="#fff"/><path d="M13.300 12h3.400v4.600H19l-4 4.700-4-4.700h2.300z" fill="#6088bc"/></svg>
<div class="act" style="left:530px;top:834px;width:32px;height:31px;"></div>
<svg style="left:537px;top:843px;" width="20" height="15" viewBox="0 0 20 15"><path d="M0 0h20L10 15z" fill="#25569b"/></svg>
<div style="left:331px;top:868px;width:1195px;height:296px;background:#fff"></div>
<div style="left:1501px;top:897px;width:25px;height:267px;background:#f0f0f0"></div>
<div style="left:1511px;top:1111px;width:5px;height:26px;background:#858585;border-radius:3px"></div>
<div style="left:357px;top:1173px;width:283px;height:6px;background:#858585;border-radius:3px"></div>
<div style="left:327px;top:868px;width:4px;height:296px;background:#f7f7f7"></div>
<svg style="left:356px;top:871.5px;" width="21" height="21" viewBox="0 0 20 20"><circle cx="10" cy="10" r="10" fill="#5b9168"/><path d="M9.600 4.300v6.600h5.200" stroke="#fff" stroke-width="2" fill="none"/></svg>
<div class="m" style="left:385px;top:871px;height:26px;line-height:26px;font-size:19px;color:#555;letter-spacing:1.500px">时间</div>
<svg style="left:458px;top:873px;" width="19" height="19" viewBox="0 0 19 19"><path d="M0 0h18.500v12H9l-5 5.500V12H0z" fill="#25569b"/></svg>
<div class="m" style="left:486px;top:871px;height:26px;line-height:26px;font-size:19px;color:#555;letter-spacing:1.500px">消息</div>
<div style="left:450px;top:895px;width:1px;height:269px;background:repeating-linear-gradient(#ececec 0,#ececec 1px,#fff 1px,#fff 2px)"></div>
<div style="left:331px;top:896.500px;width:1170px;height:267.500px;overflow:hidden">
<div class="m lg" style="left:23px;top:-13.0px;color:#008200">14:30:18</div>
<div class="m lg" style="left:136px;top:-13.0px;color:#008200">app:[Block0]ReqDownload: <span class="c">命令执行成功</span></div>
<div class="m lg" style="left:23px;top:15.0px;color:#3a3a3a">14:30:18</div>
<div class="m lg" style="left:136px;top:15.0px;color:#3a3a3a">app:[Block0]TransferData: <span class="c">启动测试</span></div>
<div class="m lg" style="left:23px;top:43.0px;color:#008200">14:31:03</div>
<div class="m lg" style="left:136px;top:43.0px;color:#008200">app:[Block0]TransferData: <span class="c">命令执行成功</span></div>
<div class="m lg" style="left:23px;top:71.0px;color:#3a3a3a">14:31:03</div>
<div class="m lg" style="left:136px;top:71.0px;color:#3a3a3a">app:[Block0]TransferExit: <span class="c">启动测试</span></div>
<div class="m lg" style="left:23px;top:99.0px;color:#008200">14:31:03</div>
<div class="m lg" style="left:136px;top:99.0px;color:#008200">app:[Block0]TransferExit: <span class="c">命令执行成功</span></div>
<div class="m lg" style="left:23px;top:127.0px;color:#3a3a3a">14:31:04</div>
<div class="m lg" style="left:136px;top:127.0px;color:#3a3a3a"><span class="c">校验</span>app: <span class="c">启动测试</span></div>
<div class="m lg" style="left:23px;top:155.0px;color:#008200">14:31:04</div>
<div class="m lg" style="left:136px;top:155.0px;color:#008200"><span class="c">校验</span>app: <span class="c">命令执行成功</span></div>
<div class="m lg" style="left:23px;top:183.0px;color:#3a3a3a">14:31:04</div>
<div class="m lg" style="left:136px;top:183.0px;color:#3a3a3a">ECU<span class="c">重启</span>: <span class="c">启动测试</span></div>
<div class="m lg" style="left:23px;top:211.0px;color:#008200">14:31:04</div>
<div class="m lg" style="left:136px;top:211.0px;color:#008200">ECU<span class="c">重启</span>: <span class="c">命令执行成功</span></div>
<div class="m lg" style="left:23px;top:239.0px;color:#3a3a3a">14:31:04</div>
<div class="m lg" style="left:136px;top:239.0px;color:#3a3a3a"><span class="c">测试流程完成，消耗时间</span>:48.472<span class="c">秒</span></div>
</div>
<div style="left:7px;top:1199px;width:1533px;height:1px;background:#a8a8a8"></div>
<div style="left:7px;top:1200px;width:1533px;height:1px;background:#fff"></div>
<div style="left:548px;top:1201px;width:1px;height:30px;background:#fff"></div>
<div style="left:550px;top:1201px;width:1px;height:30px;background:#a8a8a8"></div>
<div style="left:1149px;top:1201px;width:1px;height:30px;background:#fff"></div>
<div style="left:1151px;top:1201px;width:1px;height:30px;background:#a8a8a8"></div>
<div style="left:10px;top:1203px;height:27px;line-height:27px;font-size:16.800px;color:#0a0aff">Tab switch is forbidden when service is running</div>
<svg style="left:1520px;top:1213px;" width="18" height="18" viewBox="0 0 18 18"><path d="M17.500 2L2 17.500M17.500 8L8 17.500M17.500 14L14 17.500" stroke="#fff" stroke-width="1.600" transform="translate(-1.500,-1.500)"/><path d="M17.500 2L2 17.500M17.500 8L8 17.500M17.500 14L14 17.500" stroke="#a0a0a0" stroke-width="2"/></svg>
<svg style="left:1548px;top:55px;" width="18" height="18" viewBox="0 0 18 18"><rect width="17.800" height="17.600" fill="#669a78"/><rect x="4.400" y="2.300" width="3.100" height="12.900" fill="#fff"/><rect x="10.400" y="2.300" width="3.100" height="12.900" fill="#fff"/></svg>
<svg style="left:1580px;top:55px;" width="22" height="18" viewBox="0 0 22 18"><rect x="0" y="4.400" width="13.400" height="13.200" fill="#f0c070"/><path d="M3 0h11.600l3 3v11.700H3z" fill="#6088bc"/><path d="M14.600 0l3 3h-3z" fill="#f0c070"/><rect x="6" y="4.700" width="7.100" height="1.500" fill="#fff"/><rect x="6" y="9.200" width="7.100" height="1.500" fill="#fff"/></svg>
<svg style="left:1612px;top:55px;" width="22" height="18" viewBox="0 0 22 18"><rect x="0" y="4.400" width="13.400" height="13.200" fill="#f0c070"/><path d="M3 0h11.600l3 3v11.700H3z" fill="#6088bc"/><path d="M14.600 0l3 3h-3z" fill="#f0c070"/><rect x="6" y="4.700" width="5.500" height="1.500" fill="#fff"/><rect x="6" y="9.200" width="4" height="1.500" fill="#fff"/><circle cx="15.700" cy="12.200" r="5.400" fill="#fff"/><circle cx="15.700" cy="12.200" r="4.800" fill="#6088bc"/><path d="M17.700 10.500a2.600 2.600 0 1 0 0 3.400" stroke="#fff" stroke-width="2" fill="none"/></svg>
<svg style="left:1644px;top:55.5px;" width="17.5" height="17.5" viewBox="0 0 17.5 17.5"><path d="M1.800 1.800L15.7 15.7M15.7 1.800L1.800 15.7" stroke="#e05a68" stroke-width="4.1" stroke-linecap="round" fill="none"/></svg>
<div class="sep" style="left:1671px;top:50px;width:1px;height:29px;"></div>
<div class="act" style="left:1674px;top:48px;width:32px;height:31px;"></div>
<svg style="left:1680px;top:54.5px;" width="22" height="21" viewBox="0 0 22 21"><rect x=".4" y=".2" width="21" height="3.800" fill="#25569b"/><rect x=".4" y="5.500" width="21" height="14.800" fill="#8dbbeb"/><path d="M8.900 5.500h4v7.400h4L10.900 19.400 4.900 12.900h4z" fill="#25569b"/></svg>
<svg style="left:1711px;top:53px;" width="21.6" height="21.6" viewBox="0 0 20 20"><circle cx="10" cy="10" r="10" fill="#8aae93"/><path d="M9.600 4.300v6.600h5.200" stroke="#fff" stroke-width="2" fill="none"/></svg>
<div class="sep" style="left:1740px;top:50px;width:1px;height:29px;"></div>
<div class="act" style="left:1743px;top:48px;width:32px;height:31px;"></div>
<svg style="left:1749px;top:56px;" width="24" height="18" viewBox="0 0 24 18"><g fill="#4f9060"><rect x=".4" y=".3" width="12" height="3.700"/><rect x=".4" y="6.100" width="12" height="3.800"/><rect x=".4" y="12.100" width="12" height="3.800"/></g><path d="M17 0h3v11.400h3L18.500 16.800 14 11.400h3z" fill="#d0121b"/></svg>
<svg style="left:1780px;top:57px;" width="22" height="15" viewBox="0 0 22 15"><path d="M.4 0h21.200L11 14.200z" fill="#d0d0d0"/></svg>
<svg style="left:1812px;top:57px;" width="22" height="15" viewBox="0 0 22 15"><path d="M.3 14.200h21L10.800 0z" fill="#d0d0d0"/></svg>
<div class="sep" style="left:1841px;top:50px;width:1px;height:29px;"></div>
<svg style="left:1848px;top:52px;" width="24" height="24" viewBox="0 0 24 24"><g fill="none" stroke="#f0c070" stroke-width="1.100"><path d="M.6 6V.6h5.400M18 .6h5.400V6M23.400 18v5.400H18M6 23.400H.6V18"/></g><path d="M3.200 7.200h4L8.500 4.500h7L16.800 7.200h4.200v11.600H3.200z" fill="#6088bc"/><circle cx="12.100" cy="13.400" r="3.700" fill="none" stroke="#fff" stroke-width="1.400"/></svg>
<div class="sep" style="left:1878px;top:50px;width:1px;height:29px;"></div>
<svg style="left:1886.5px;top:53.7px;" width="21" height="21" viewBox="0 0 21 21"><path fill-rule="evenodd" fill="#94689a" stroke="#94689a" stroke-width="1.6" stroke-linejoin="round" d="M7.48 4.08 L7.53 1.37 L13.47 1.37 L13.52 4.08 L14.55 4.67 L16.92 3.37 L19.89 8.50 L17.58 9.91 L17.58 11.09 L19.89 12.50 L16.92 17.63 L14.55 16.33 L13.52 16.92 L13.47 19.63 L7.53 19.63 L7.48 16.92 L6.45 16.33 L4.08 17.63 L1.11 12.50 L3.42 11.09 L3.42 9.91 L1.11 8.50 L4.08 3.37 L6.45 4.67Z M14.70 10.50 A4.2 4.2 0 1 0 6.30 10.50 A4.2 4.2 0 1 0 14.70 10.50Z"/></svg>
<div style="left:1914px;top:53px;height:24px;line-height:24px;font-size:17.5px">设置</div>
<svg style="left:1952px;top:62px;" width="10" height="6" viewBox="0 0 10 6"><path d="M0 0h9.600L4.800 5.200z" fill="#000"/></svg>
<div class="sep" style="left:1971px;top:50px;width:1px;height:29px;"></div>
<div style="left:1977px;top:53px;height:24px;line-height:24px;font-size:18px">过滤字符串<span style="font-size:17px">:</span></div>
<svg style="left:2079.5px;top:53px;" width="23" height="22" viewBox="0 0 23 22"><path d="M.3 0h17.800v3.200L11.300 10.500v8.200L7.400 21.500V10.500L.3 3.200z" fill="#6088bc"/><rect x="12" y="12" width="10" height="10" fill="#5b9a68"/><path d="M14 17l2.200 2.200 4-4.200" stroke="#fff" stroke-width="1.300" fill="none"/></svg>
<div class="btn" style="left:2583px;top:50px;width:28px;height:28px;"></div>
<svg style="left:2588px;top:55.6px;" width="17.4" height="17.4" viewBox="0 0 17.4 17.4"><path d="M1.800 1.800L15.599999999999998 15.599999999999998M15.599999999999998 1.800L1.800 15.599999999999998" stroke="#d0121b" stroke-width="4.3" stroke-linecap="round" fill="none"/></svg>
<svg style="left:2619.3px;top:54.6px;" width="20" height="20" viewBox="0 0 20 20"><circle cx="7" cy="6.800" r="5.900" fill="#6088bc"/><path d="M5.700 5.500L0 -.2" stroke="#fff" stroke-width="4.300" stroke-linecap="round"/><path d="M9 8.800l8 8" stroke="#6088bc" stroke-width="3.500" stroke-linecap="round"/></svg>
<svg style="left:2643.8px;top:61px;" width="10" height="6" viewBox="0 0 10 6"><path d="M0 0h9.600L4.800 5.200z" fill="#000"/></svg>
<svg style="left:2666.5px;top:53px;" width="22" height="23" viewBox="0 0 22 23"><g fill="none" stroke="#ecb765" stroke-width="2.6" stroke-linecap="round" stroke-dasharray="28.83 10.13"><circle cx="13.550" cy="7.500" r="6.2" transform="rotate(137 13.550 7.500)"/><circle cx="7.300" cy="14.300" r="6.2" transform="rotate(-47 7.300 14.300)"/></g></svg>
<svg style="left:2699.7px;top:53.4px;" width="23" height="22" viewBox="0 0 23 22"><path d="M.3 0h17.800v3.200L11.300 10.500v8.200L7.400 21.500V10.500L.3 3.200z" fill="#6088bc"/></svg>
<svg style="left:2730px;top:53px;" width="24" height="24" viewBox="0 0 24 24"><rect x=".8" y="1" width="17.400" height="16.600" rx="1.500" fill="#fff" stroke="#b5d4f5" stroke-width="1.500"/><rect x="5.400" y="5.400" width="16" height="16" rx="1" fill="#fff" stroke="#6088bc" stroke-width="1.300"/><rect x="4.800" y="4.800" width="17.200" height="5.800" rx="1" fill="#6088bc"/><rect x="11.200" y="11.500" width="12" height="12" fill="#fff"/><path d="M13.400 13.400l7.400 7.600M20.800 13.400l-7.400 7.600" stroke="#e05a68" stroke-width="2.700"/></svg>
<svg style="left:2762.8px;top:53.5px;" width="22" height="22" viewBox="0 0 22 22"><rect x="1.800" y="6" width="14" height="13.400" fill="#fff" stroke="#6088bc" stroke-width="1.300"/><rect x="5.800" y=".8" width="14.700" height="14.400" fill="#6088bc"/><circle cx="20.500" cy=".8" r="8.800" fill="#fff"/><path d="M12.800 8L17.500 3.500" stroke="#e05a68" stroke-width="2.800"/><path d="M13.600 1.200L20.600.700 20.200 7.600z" fill="#e05a68"/></svg>
<svg style="left:2788.3px;top:61px;" width="10" height="6" viewBox="0 0 10 6"><path d="M0 0h9.600L4.800 5.200z" fill="#000"/></svg>
<svg style="left:1553.5px;top:81.5px;" width="21" height="21" viewBox="0 0 20 20"><circle cx="10" cy="10" r="10" fill="#5b9168"/><path d="M9.600 4.300v6.600h5.200" stroke="#fff" stroke-width="2" fill="none"/></svg>
<div class="m" style="left:1580px;top:82px;height:24px;line-height:24px;font-size:22px;letter-spacing:2.300px;color:#000">绝对时间</div>
<div class="m" style="left:1745.5px;top:82px;height:24px;line-height:24px;font-size:22px;letter-spacing:2.300px;color:#000">通道</div>
<svg style="left:1814px;top:83px;" width="16" height="18" viewBox="0 0 16 18"><rect width="16" height="18" fill="#25569b"/><path d="M6 3.500l-1.500 11M11.500 3.500l-1.500 11M3 7h10.500M2.500 11.500H13" stroke="#fff" stroke-width="1.500"/></svg>
<div class="m" style="left:1839.7px;top:82px;height:24px;line-height:24px;font-size:22px;letter-spacing:2.300px;color:#000">标<span style="font-size:20.300px;letter-spacing:0;margin-left:-2.300px">...</span></div>
<div class="m" style="left:1917px;top:82px;height:24px;line-height:24px;font-size:22px;letter-spacing:2.300px;color:#000">方向</div>
<div class="m" style="left:1977.5px;top:82px;height:24px;line-height:24px;font-size:22px;letter-spacing:2.300px;color:#000">数据长度</div>
<div class="m" style="left:2091.5px;top:81px;height:24px;line-height:24px;font-size:21px;letter-spacing:-.600px;color:#000;-webkit-text-stroke:.45px #000">00 01 02 03 04 05 06 07 08 09 10 11 12 13 14 15 16 17 18 19</div>
<div style="left:1735px;top:81px;width:1px;height:1095px;background:repeating-linear-gradient(#ededed 0,#ededed 1px,#fff 1px,#fff 2px)"></div>
<div style="left:1805px;top:81px;width:1px;height:1095px;background:repeating-linear-gradient(#ededed 0,#ededed 1px,#fff 1px,#fff 2px)"></div>
<div style="left:1910px;top:81px;width:1px;height:1095px;background:repeating-linear-gradient(#ededed 0,#ededed 1px,#fff 1px,#fff 2px)"></div>
<div style="left:1970px;top:81px;width:1px;height:1095px;background:repeating-linear-gradient(#ededed 0,#ededed 1px,#fff 1px,#fff 2px)"></div>
<div style="left:2080px;top:81px;width:1px;height:1095px;background:repeating-linear-gradient(#ededed 0,#ededed 1px,#fff 1px,#fff 2px)"></div>
<div style="left:1542px;top:103px;width:1233px;height:1073px;overflow:hidden">
<div style="left:17.500px;top:0;width:1px;height:1062px;background:repeating-linear-gradient(#9a9a9a 0,#9a9a9a 1px,#fff 1px,#fff 2px)"></div>
<div class="cr m" style="top:-5px"><b></b><i></i><span style="left:59px">1187.39...</span><span style="left:204px">C...</span><span style="left:274px">700</span><span style="left:389px">Tx</span><span style="left:480px">8</span><span style="left:548px">2B 00 00 00 00 00 00 00</span></div>
<div class="cr m" style="top:17px"><b></b><i></i><span style="left:59px">1187.40...</span><span style="left:204px">C...</span><span style="left:274px">700</span><span style="left:389px">Tx</span><span style="left:480px">8</span><span style="left:548px">2C 00 00 00 00 00 00 00</span></div>
<div class="cr m" style="top:39px"><b></b><i></i><span style="left:59px">1187.41...</span><span style="left:204px">C...</span><span style="left:274px">700</span><span style="left:389px">Tx</span><span style="left:480px">8</span><span style="left:548px">2D 00 00 00 00 00 00 00</span></div>
<div class="cr m" style="top:61px"><b></b><i></i><span style="left:59px">1187.42...</span><span style="left:204px">C...</span><span style="left:274px">700</span><span style="left:389px">Tx</span><span style="left:480px">8</span><span style="left:548px">2E 00 00 00 00 00 00 00</span></div>
<div class="cr m" style="top:83px"><b></b><i></i><span style="left:59px">1187.43...</span><span style="left:204px">C...</span><span style="left:274px">700</span><span style="left:389px">Tx</span><span style="left:480px">8</span><span style="left:548px">2F 00 00 00 00 00 00 00</span></div>
<div class="cr m" style="top:105px"><b></b><i></i><span style="left:59px">1187.44...</span><span style="left:204px">C...</span><span style="left:274px">700</span><span style="left:389px">Tx</span><span style="left:480px">8</span><span style="left:548px">20 00 00 00 00 00 00 00</span></div>
<div class="cr m" style="top:127px"><b></b><i></i><span style="left:59px">1187.45...</span><span style="left:204px">C...</span><span style="left:274px">700</span><span style="left:389px">Tx</span><span style="left:480px">8</span><span style="left:548px">21 00 00 00 00 00 00 00</span></div>
<div class="cr m" style="top:149px"><b></b><i></i><span style="left:59px">1187.46...</span><span style="left:204px">C...</span><span style="left:274px">700</span><span style="left:389px">Tx</span><span style="left:480px">8</span><span style="left:548px">22 00 00 00 00 00 AA AA</span></div>
<div class="cr m" style="top:171px"><b></b><i class="g"></i><span style="left:59px">1187.47...</span><span style="left:204px">C...</span><span style="left:274px">6FF</span><span style="left:389px">Rx</span><span style="left:480px">8</span><span style="left:548px">02 76 9B AA AA AA AA AA</span></div>
<div class="cr m" style="top:193px"><b></b><i></i><span style="left:59px">1187.47...</span><span style="left:204px">C...</span><span style="left:274px">700</span><span style="left:389px">Tx</span><span style="left:480px">8</span><span style="left:548px">10 82 36 9C 00 00 00 00</span></div>
<div class="cr m" style="top:215px"><b></b><i class="g"></i><span style="left:59px">1187.52...</span><span style="left:204px">C...</span><span style="left:274px">6FF</span><span style="left:389px">Rx</span><span style="left:480px">8</span><span style="left:548px">30 0A 0A AA AA AA AA AA</span></div>
<div class="cr m" style="top:237px"><b></b><i></i><span style="left:59px">1187.53...</span><span style="left:204px">C...</span><span style="left:274px">700</span><span style="left:389px">Tx</span><span style="left:480px">8</span><span style="left:548px">21 00 00 00 00 00 00 00</span></div>
<div class="cr m" style="top:259px"><b></b><i></i><span style="left:59px">1187.54...</span><span style="left:204px">C...</span><span style="left:274px">700</span><span style="left:389px">Tx</span><span style="left:480px">8</span><span style="left:548px">22 00 00 00 00 00 00 00</span></div>
<div class="cr m" style="top:281px"><b></b><i></i><span style="left:59px">1187.55...</span><span style="left:204px">C...</span><span style="left:274px">700</span><span style="left:389px">Tx</span><span style="left:480px">8</span><span style="left:548px">23 00 00 00 00 00 00 00</span></div>
<div class="cr m" style="top:303px"><b></b><i></i><span style="left:59px">1187.56...</span><span style="left:204px">C...</span><span style="left:274px">700</span><span style="left:389px">Tx</span><span style="left:480px">8</span><span style="left:548px">24 00 00 00 00 00 00 00</span></div>
<div class="cr m" style="top:325px"><b></b><i></i><span style="left:59px">1187.57...</span><span style="left:204px">C...</span><span style="left:274px">700</span><span style="left:389px">Tx</span><span style="left:480px">8</span><span style="left:548px">25 00 00 00 00 00 00 00</span></div>
<div class="cr m" style="top:347px"><b></b><i></i><span style="left:59px">1187.58...</span><span style="left:204px">C...</span><span style="left:274px">700</span><span style="left:389px">Tx</span><span style="left:480px">8</span><span style="left:548px">26 00 00 00 00 00 00 00</span></div>
<div class="cr m" style="top:369px"><b></b><i></i><span style="left:59px">1187.59...</span><span style="left:204px">C...</span><span style="left:274px">700</span><span style="left:389px">Tx</span><span style="left:480px">8</span><span style="left:548px">27 00 00 00 00 00 00 00</span></div>
<div class="cr m" style="top:391px"><b></b><i></i><span style="left:59px">1187.60...</span><span style="left:204px">C...</span><span style="left:274px">700</span><span style="left:389px">Tx</span><span style="left:480px">8</span><span style="left:548px">28 00 00 00 00 00 00 00</span></div>
<div class="cr m" style="top:413px"><b></b><i></i><span style="left:59px">1187.61...</span><span style="left:204px">C...</span><span style="left:274px">700</span><span style="left:389px">Tx</span><span style="left:480px">8</span><span style="left:548px">29 00 00 00 00 00 00 00</span></div>
<div class="cr m" style="top:435px"><b></b><i></i><span style="left:59px">1187.62...</span><span style="left:204px">C...</span><span style="left:274px">700</span><span style="left:389px">Tx</span><span style="left:480px">8</span><span style="left:548px">2A 00 00 00 00 00 00 00</span></div>
<div class="cr m" style="top:457px"><b></b><i class="g"></i><span style="left:59px">1187.67...</span><span style="left:204px">C...</span><span style="left:274px">6FF</span><span style="left:389px">Rx</span><span style="left:480px">8</span><span style="left:548px">30 0A 0A AA AA AA AA AA</span></div>
<div class="cr m" style="top:479px"><b></b><i></i><span style="left:59px">1187.68...</span><span style="left:204px">C...</span><span style="left:274px">700</span><span style="left:389px">Tx</span><span style="left:480px">8</span><span style="left:548px">2B 00 00 00 00 00 00 00</span></div>
<div class="cr m" style="top:501px"><b></b><i></i><span style="left:59px">1187.69...</span><span style="left:204px">C...</span><span style="left:274px">700</span><span style="left:389px">Tx</span><span style="left:480px">8</span><span style="left:548px">2C 00 00 00 00 00 00 00</span></div>
<div class="cr m" style="top:523px"><b></b><i></i><span style="left:59px">1187.70...</span><span style="left:204px">C...</span><span style="left:274px">700</span><span style="left:389px">Tx</span><span style="left:480px">8</span><span style="left:548px">2D 00 00 00 00 00 00 00</span></div>
<div class="cr m" style="top:545px"><b></b><i></i><span style="left:59px">1187.72...</span><span style="left:204px">C...</span><span style="left:274px">700</span><span style="left:389px">Tx</span><span style="left:480px">8</span><span style="left:548px">2E 00 00 00 00 00 00 00</span></div>
<div class="cr m" style="top:567px"><b></b><i></i><span style="left:59px">1187.73...</span><span style="left:204px">C...</span><span style="left:274px">700</span><span style="left:389px">Tx</span><span style="left:480px">8</span><span style="left:548px">2F 00 00 00 00 00 00 00</span></div>
<div class="cr m" style="top:589px"><b></b><i></i><span style="left:59px">1187.74...</span><span style="left:204px">C...</span><span style="left:274px">700</span><span style="left:389px">Tx</span><span style="left:480px">8</span><span style="left:548px">20 00 00 00 00 00 00 00</span></div>
<div class="cr m" style="top:611px"><b></b><i></i><span style="left:59px">1187.75...</span><span style="left:204px">C...</span><span style="left:274px">700</span><span style="left:389px">Tx</span><span style="left:480px">8</span><span style="left:548px">21 00 00 00 00 00 00 00</span></div>
<div class="cr m" style="top:633px"><b></b><i></i><span style="left:59px">1187.76...</span><span style="left:204px">C...</span><span style="left:274px">700</span><span style="left:389px">Tx</span><span style="left:480px">8</span><span style="left:548px">22 00 00 00 00 00 AA AA</span></div>
<div class="cr m" style="top:655px"><b></b><i class="g"></i><span style="left:59px">1187.76...</span><span style="left:204px">C...</span><span style="left:274px">6FF</span><span style="left:389px">Rx</span><span style="left:480px">8</span><span style="left:548px">02 76 9C AA AA AA AA AA</span></div>
<div class="cr m" style="top:677px"><b></b><i></i><span style="left:59px">1187.76...</span><span style="left:204px">C...</span><span style="left:274px">700</span><span style="left:389px">Tx</span><span style="left:480px">8</span><span style="left:548px">10 42 36 9D 00 00 00 00</span></div>
<div class="cr m" style="top:699px"><b></b><i class="g"></i><span style="left:59px">1187.81...</span><span style="left:204px">C...</span><span style="left:274px">6FF</span><span style="left:389px">Rx</span><span style="left:480px">8</span><span style="left:548px">30 0A 0A AA AA AA AA AA</span></div>
<div class="cr m" style="top:721px"><b></b><i></i><span style="left:59px">1187.82...</span><span style="left:204px">C...</span><span style="left:274px">700</span><span style="left:389px">Tx</span><span style="left:480px">8</span><span style="left:548px">21 00 00 00 00 00 00 00</span></div>
<div class="cr m" style="top:743px"><b></b><i></i><span style="left:59px">1187.83...</span><span style="left:204px">C...</span><span style="left:274px">700</span><span style="left:389px">Tx</span><span style="left:480px">8</span><span style="left:548px">22 00 00 00 00 00 00 00</span></div>
<div class="cr m" style="top:765px"><b></b><i></i><span style="left:59px">1187.84...</span><span style="left:204px">C...</span><span style="left:274px">700</span><span style="left:389px">Tx</span><span style="left:480px">8</span><span style="left:548px">23 00 00 00 00 00 00 00</span></div>
<div class="cr m" style="top:787px"><b></b><i></i><span style="left:59px">1187.85...</span><span style="left:204px">C...</span><span style="left:274px">700</span><span style="left:389px">Tx</span><span style="left:480px">8</span><span style="left:548px">24 00 00 00 00 00 00 00</span></div>
<div class="cr m" style="top:809px"><b></b><i></i><span style="left:59px">1187.86...</span><span style="left:204px">C...</span><span style="left:274px">700</span><span style="left:389px">Tx</span><span style="left:480px">8</span><span style="left:548px">25 00 00 00 00 00 00 00</span></div>
<div class="cr m" style="top:831px"><b></b><i></i><span style="left:59px">1187.87...</span><span style="left:204px">C...</span><span style="left:274px">700</span><span style="left:389px">Tx</span><span style="left:480px">8</span><span style="left:548px">26 00 00 00 00 00 00 00</span></div>
<div class="cr m" style="top:853px"><b></b><i></i><span style="left:59px">1187.88...</span><span style="left:204px">C...</span><span style="left:274px">700</span><span style="left:389px">Tx</span><span style="left:480px">8</span><span style="left:548px">27 00 00 00 00 00 00 00</span></div>
<div class="cr m" style="top:875px"><b></b><i></i><span style="left:59px">1187.89...</span><span style="left:204px">C...</span><span style="left:274px">700</span><span style="left:389px">Tx</span><span style="left:480px">8</span><span style="left:548px">28 00 00 00 00 00 00 00</span></div>
<div class="cr m" style="top:897px"><b></b><i></i><span style="left:59px">1187.90...</span><span style="left:204px">C...</span><span style="left:274px">700</span><span style="left:389px">Tx</span><span style="left:480px">8</span><span style="left:548px">29 00 00 00 00 AA AA AA</span></div>
<div class="cr m" style="top:919px"><b></b><i class="g"></i><span style="left:59px">1187.90...</span><span style="left:204px">C...</span><span style="left:274px">6FF</span><span style="left:389px">Rx</span><span style="left:480px">8</span><span style="left:548px">02 76 9D AA AA AA AA AA</span></div>
<div class="cr m" style="top:941px"><b></b><i></i><span style="left:59px">1187.91...</span><span style="left:204px">C...</span><span style="left:274px">700</span><span style="left:389px">Tx</span><span style="left:480px">8</span><span style="left:548px">01 37 AA AA AA AA AA AA</span></div>
<div class="cr m" style="top:963px"><b></b><i class="g"></i><span style="left:59px">1187.91...</span><span style="left:204px">C...</span><span style="left:274px">6FF</span><span style="left:389px">Rx</span><span style="left:480px">8</span><span style="left:548px">01 77 AA AA AA AA AA AA</span></div>
<div class="cr m" style="top:985px"><b></b><i></i><span style="left:59px">1188.01...</span><span style="left:204px">C...</span><span style="left:274px">700</span><span style="left:389px">Tx</span><span style="left:480px">8</span><span style="left:548px">06 31 01 02 02 55 E1 AA</span></div>
<div class="cr m" style="top:1007px"><b></b><i class="g"></i><span style="left:59px">1188.07...</span><span style="left:204px">C...</span><span style="left:274px">6FF</span><span style="left:389px">Rx</span><span style="left:480px">8</span><span style="left:548px">04 71 01 02 02 AA AA AA</span></div>
<div class="cr m" style="top:1029px"><b></b><i></i><span style="left:59px">1188.17...</span><span style="left:204px">C...</span><span style="left:274px">700</span><span style="left:389px">Tx</span><span style="left:480px">8</span><span style="left:548px">02 11 01 AA AA AA AA AA</span></div>
<div class="cr m" style="top:1051px"><b></b><i class="g"></i><span style="left:59px">1188.17...</span><span style="left:204px">C...</span><span style="left:274px">6FF</span><span style="left:389px">Rx</span><span style="left:480px">8</span><span style="left:548px">02 51 01 AA AA AA AA AA</span></div>
</div>
<div style="left:2775px;top:103px;width:25px;height:1074px;background:#f0f0f0"></div>
<div style="left:2785px;top:1124px;width:5px;height:26px;background:#858585;border-radius:3px"></div>
<div style="left:1546px;top:1177px;width:1254px;height:26px;background:#f0f0f0"></div>
<div style="left:1572px;top:1187px;width:519px;height:5px;background:#858585;border-radius:3px"></div>
<div style="left:1542px;top:1203px;width:1263px;height:29px;background:#f0f0f0"></div>
<div style="left:1542px;top:1203px;width:1262px;height:1px;background:#a8a8a8"></div>
<div style="left:1542px;top:1204px;width:1262px;height:1px;background:#fff"></div>
<div style="left:1781px;top:1206px;width:1px;height:25px;background:#fff"></div>
<div style="left:1783px;top:1206px;width:1px;height:25px;background:#a8a8a8"></div>
<div style="left:1784px;top:1205px;width:245px;height:1px;background:#a8a8a8"></div>
<div style="left:2026px;top:1206px;width:1px;height:25px;background:#fff"></div>
<div style="left:2028px;top:1206px;width:1px;height:25px;background:#a8a8a8"></div>
<div style="left:1544px;top:1205px;height:26px;line-height:26px;font-size:17px">列表计数<span style="font-size:16.500px">: 2275</span></div>
<div style="left:1789px;top:1205px;height:26px;line-height:26px;font-size:17px">总数量<span style="font-size:16.500px">: 10000</span></div>
<div style="left:2029px;top:1204px;width:752px;height:29px;background:#f3edf2;border:1px solid #bcbcbc;border-bottom:none"></div>
<div style="left:2032px;top:1207px;width:746px;height:24px;background:#06b025"></div>
<div style="left:2304px;top:1206px;height:26px;line-height:26px;width:200px;font-size:16.500px;text-align:center">100 %</div>
<svg style="left:2786px;top:1213px;" width="18" height="18" viewBox="0 0 18 18"><path d="M17.500 2L2 17.500M17.500 8L8 17.500M17.500 14L14 17.500" stroke="#fff" stroke-width="1.600" transform="translate(-1.500,-1.500)"/><path d="M17.500 2L2 17.500M17.500 8L8 17.500M17.500 14L14 17.500" stroke="#a0a0a0" stroke-width="2"/></svg>
<div style="left:2800px;top:103px;width:5px;height:1099px;background:#fff"></div>
</body></html>
